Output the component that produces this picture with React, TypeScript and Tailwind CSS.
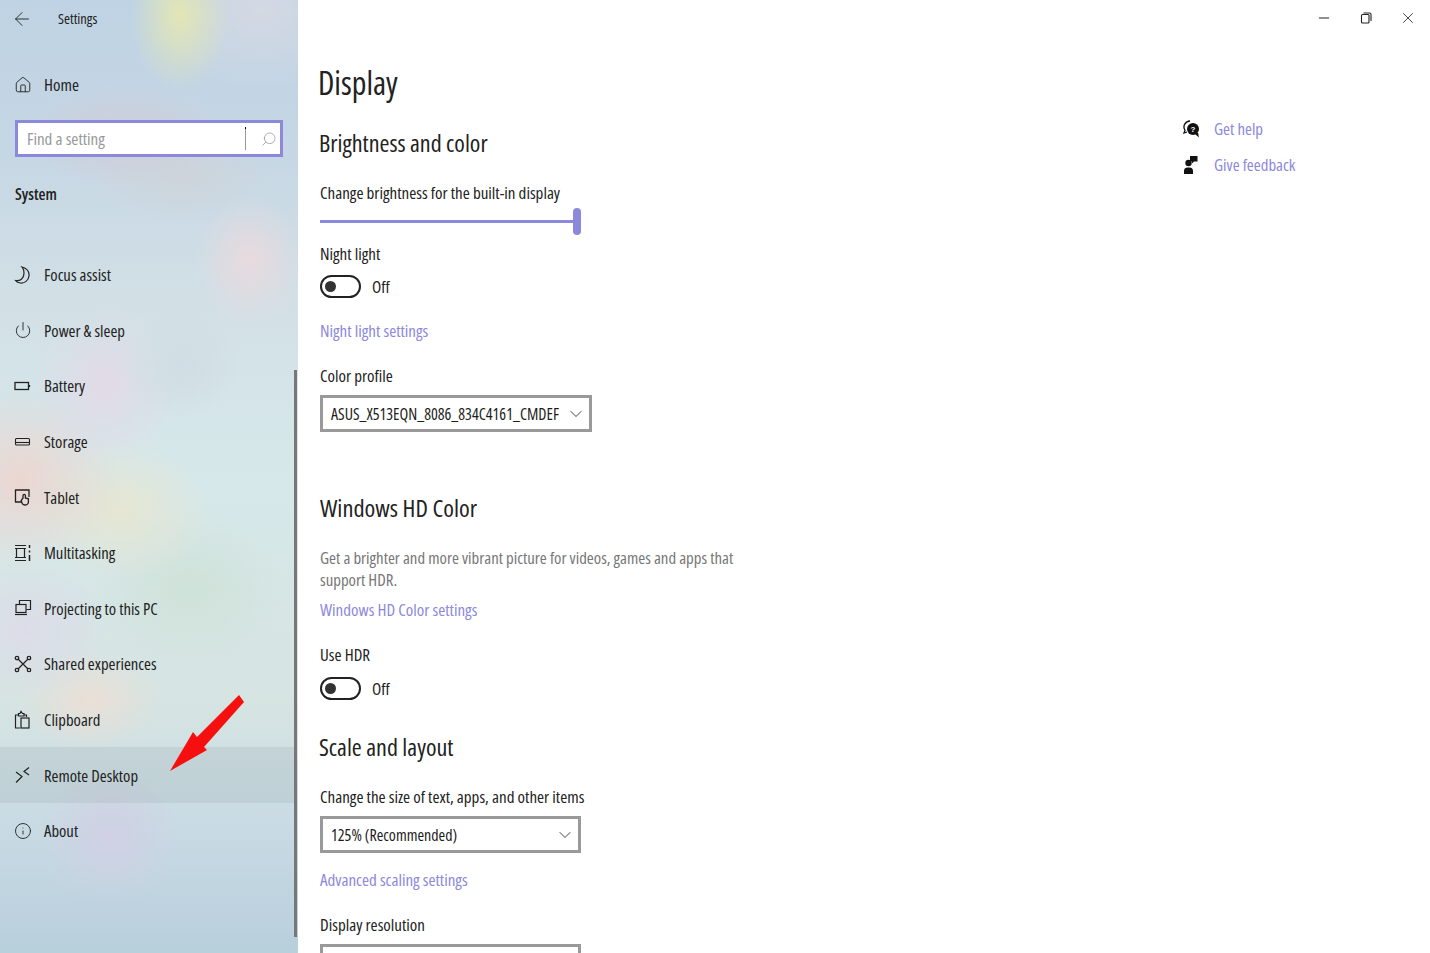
import { ArrowLeft, Home, Search, Power, ChevronDown, Minus, X, Info } from "lucide-react";
import type { ReactNode } from "react";

const cls = "fill-none stroke-[#222]";

function Moon() {
  return (
    <svg width="18" height="18" viewBox="0 0 18 18" className={cls} strokeWidth="1.2">
      <path d="M8 1C13 2.500 15.500 6 15 10C14.500 14.500 10.500 17.500 6.500 17C4.500 16.800 2.500 16 1.500 14.500C5.500 15 8.500 13 9.500 10C10.300 7 10 3.500 8 1z" />
    </svg>
  );
}
function Battery() {
  return (
    <svg width="18" height="18" viewBox="0 0 18 18" className={cls} strokeWidth="1.3">
      <rect x="1" y="5.500" width="13.500" height="7" />
      <path d="M15.500 8v2" />
    </svg>
  );
}
function Storage() {
  return (
    <svg width="18" height="18" viewBox="0 0 18 18" className={cls} strokeWidth="1.1">
      <rect x="1.500" y="5.500" width="14" height="6.500" rx="1" />
      <path d="M2 9.500h13" />
    </svg>
  );
}
function Tablet() {
  return (
    <svg width="18" height="18" viewBox="0 0 18 18" className={cls} strokeWidth="1.3">
      <path d="M8 14H1.500V2h13.500v7" />
      <path d="M9 10V7.500a1.200 1.200 0 0 1 2.400 0V10l3 .8V14a3 3 0 0 1-3 3h-.6a3 3 0 0 1-2.800-2l-.8-2.500z" />
    </svg>
  );
}
function Multitask() {
  return (
    <svg width="18" height="18" viewBox="0 0 18 18" className={cls} strokeWidth="1.2">
      <path d="M1 1.500h11M1 16.500h11M1 13.500h11M1 4.500h11" />
      <path d="M2.500 4.500v9M10.500 4.500v9" />
      <path d="M15.500 1v3M15.500 6.500v2M15.500 11v6" strokeWidth="1.500" />
    </svg>
  );
}
function Project() {
  return (
    <svg width="18" height="18" viewBox="0 0 18 18" className={cls} strokeWidth="1.2">
      <path d="M5.500 5V1.500h11v9h-4" />
      <rect x="2" y="5.500" width="10" height="8" />
      <path d="M1 15.500h12" />
    </svg>
  );
}
function Shared() {
  return (
    <svg width="18" height="18" viewBox="0 0 18 18" className={cls} strokeWidth="1.300">
      <path d="M4 4l10 10M14 4L4 14" />
      <circle cx="3" cy="3" r="1.700" fill="#dfe8e2" />
      <circle cx="15" cy="3" r="1.700" fill="#dfe8e2" />
      <circle cx="3" cy="15" r="1.700" fill="#dfe8e2" />
      <circle cx="15" cy="15" r="1.700" fill="#dfe8e2" />
    </svg>
  );
}
function Clipboard() {
  return (
    <svg width="18" height="20" viewBox="0 0 18 20" className={cls} strokeWidth="1.200">
      <path d="M6 18H1.500V5h3M10 5h2.500v2" />
      <path d="M4.500 6V3.500h1.500L7 1.500 8.500 3.500H10V6z" />
      <rect x="7" y="8" width="8" height="10" />
    </svg>
  );
}
function Remote() {
  return (
    <svg width="18" height="18" viewBox="0 0 18 18" className={cls} strokeWidth="1.200">
      <path d="M2 6l6 4.500-6 6" />
      <path d="M15 1.500l-5 4 5 3.500" />
    </svg>
  );
}
function Restore() {
  return (
    <svg width="12" height="12" viewBox="0 0 12 12" className={cls} strokeWidth="1.100">
      <rect x="1.500" y="2.500" width="7.500" height="8.500" rx="1" />
      <path d="M3.500 1h6a1.500 1.500 0 0 1 1.500 1.500V9" />
    </svg>
  );
}
function HelpIcon() {
  return (
    <svg width="18" height="18" viewBox="0 0 18 18">
      <path d="M7 1a6 6 0 0 0-5 9.300L1 13l3-1" fill="none" stroke="#111" strokeWidth="1.300" />
      <circle cx="10" cy="9" r="6" fill="#111" />
      <path d="M12 14l4 3.500-1-5z" fill="#111" />
      <text x="10" y="12" textAnchor="middle" fontSize="8" fontWeight="700" fill="#fff" fontFamily="Liberation Sans">?</text>
    </svg>
  );
}
function FeedbackIcon() {
  return (
    <svg width="16" height="20" viewBox="0 0 16 20" fill="#111">
      <circle cx="5.500" cy="8" r="3.200" />
      <path d="M1 19v-3.500a3.500 3.500 0 0 1 3.500-3h2a3.500 3.500 0 0 1 3.500 3V19z" />
      <path d="M7 1h7.500v5.500H11L9 8.500V6.500H7z" />
    </svg>
  );
}

const items: { label: string; icon: ReactNode; active?: boolean }[] = [
  { label: "Focus assist", icon: <Moon /> },
  { label: "Power & sleep", icon: <Power size={20} strokeWidth={1.200} /> },
  { label: "Battery", icon: <Battery /> },
  { label: "Storage", icon: <Storage /> },
  { label: "Tablet", icon: <Tablet /> },
  { label: "Multitasking", icon: <Multitask /> },
  { label: "Projecting to this PC", icon: <Project /> },
  { label: "Shared experiences", icon: <Shared /> },
  { label: "Clipboard", icon: <Clipboard /> },
  { label: "Remote Desktop", icon: <Remote />, active: true },
  { label: "About", icon: <Info size={18} strokeWidth={1.200} /> },
];

function Toggle() {
  return (
    <div className="flex items-center gap-[11px]">
      <div className="w-[41px] h-[23px] rounded-full border-2 border-[#222] flex items-center pl-[3px]">
        <div className="w-[11px] h-[11px] rounded-full bg-[#333]" />
      </div>
      <span className="text-[17px] text-[#222] leading-none">Off</span>
    </div>
  );
}

function Select({ label, width }: { label: string; width: string }) {
  return (
    <div className={`${width} h-[37px] border-[3px] border-[#999] flex items-center justify-between pl-[8px] pr-[3px] text-[#1c1c1c] text-[16px]`}>
      <span>{label}</span>
      <ChevronDown size={20} strokeWidth={1} />
    </div>
  );
}

export default function App() {
  return (
    <div className="relative w-[1430px] h-[953px] overflow-hidden bg-white flex text-[#222] text-[17px] [font-family:'Open_Sans','Noto_Sans',sans-serif] [font-stretch:75%]">
      <aside className="relative w-[298px] h-full shrink-0 text-[16.700px] bg-[radial-gradient(ellipse_50px_75px_at_180px_15px,#e2e6b4_0,transparent_100%),radial-gradient(ellipse_110px_80px_at_260px_10px,#d4d9e3_0,transparent_100%),radial-gradient(ellipse_100px_50px_at_125px_135px,#d0ccd8_0,transparent_100%),radial-gradient(ellipse_90px_45px_at_180px_175px,#ced4da_0,transparent_100%),radial-gradient(ellipse_55px_65px_at_250px_260px,#e8dade_0,transparent_100%),radial-gradient(ellipse_60px_55px_at_180px_365px,#d0dde4_0,transparent_100%),radial-gradient(ellipse_70px_80px_at_105px_385px,#e2dae6_0,transparent_100%),radial-gradient(ellipse_100px_90px_at_20px_480px,#ecd6d0_0,transparent_100%),radial-gradient(ellipse_90px_70px_at_120px_510px,#e6e6d2_0,transparent_100%),radial-gradient(ellipse_100px_80px_at_190px_590px,#cfe2d8_0,transparent_100%),radial-gradient(ellipse_90px_70px_at_25px_630px,#dcdce8_0,transparent_100%),radial-gradient(ellipse_70px_50px_at_90px_700px,#eadfd6_0,transparent_100%),radial-gradient(ellipse_70px_70px_at_110px_835px,#d0d0e4_0,transparent_100%),linear-gradient(180deg,#bfd3e4_0,#c5d6e4_140px,#d2e0e6_300px,#d6e8ea_480px,#d6e4e2_700px,#c8dae4_830px,#b8cfdc_953px)]">
        <div className="flex items-center h-[38px] pl-[11px]">
          <ArrowLeft size={22} strokeWidth={1} />
          <span className="ml-[25px] text-[14.500px]">Settings</span>
        </div>
        <div className="flex items-center h-[59px] mt-[23px] pl-[14px] pb-[11px]">
          <Home size={18} strokeWidth={1.200} />
          <span className="ml-[12px] text-[17px]">Home</span>
        </div>
        <div className="mx-[15px] w-[268px] h-[37px] bg-white border-[3px] border-[#8c88dc] flex items-center justify-between pl-[9px] pr-[3px]">
          <span className="text-[#999] text-[17px]">Find a setting</span>
          <div className="flex items-center gap-[15px]">
            <div className="w-px h-[23px] bg-[#999] border-t-2 border-black" />
            <Search size={16} strokeWidth={1} className="text-[#888] -scale-x-100" />
          </div>
        </div>
        <div className="mt-[25px] pl-[15px] h-[24px] text-[16px] font-semibold leading-[24px]">System</div>
        <nav className="mt-[41px]">
          {items.map((it) => (
            <div key={it.label} className={`flex items-center h-[55.600px] pl-[14px] ${it.active ? "bg-[#788a8a]/15 w-[296px]" : ""}`}>
              <span className="w-[18px] flex justify-center">{it.icon}</span>
              <span className="ml-[12px]">{it.label}</span>
            </div>
          ))}
        </nav>
        <div className="absolute left-[294px] top-[370px] w-[3px] h-[567px] bg-[#777]" />
        <svg className="absolute left-[165px] top-[690px]" width="85" height="90" viewBox="165 690 85 90">
          <polygon points="239,695 244,702 204,747 207,750 170,771 193,732 197,737" fill="#f50f0f" />
        </svg>
      </aside>

      <main className="flex-1 pl-[20px] relative">
        <h1 className="mt-[61px] text-[32px] leading-[44px]">Display</h1>
        <h2 className="mt-[20px] text-[24px] leading-[36px] ml-[1px]">Brightness and color</h2>
        <p className="mt-[19px] ml-[2px] leading-[26px]">Change brightness for the built-in display</p>
        <div className="ml-[2px] mt-[1px] w-[261px] h-[28px] flex items-center">
          <div className="flex-1 h-[3px] bg-[#8c88dc]" />
          <div className="w-[8px] h-[27px] rounded-full bg-[#8c88dc]" />
        </div>
        <p className="mt-[6px] ml-[2px] leading-[26px]">Night light</p>
        <div className="mt-[8px] ml-[2px]"><Toggle /></div>
        <p className="mt-[20px] ml-[2px] leading-[26px] text-[#8c88dc]">Night light settings</p>
        <p className="mt-[19px] ml-[2px] leading-[26px]">Color profile</p>
        <div className="mt-[6px] ml-[2px]"><Select label="ASUS_X513EQN_8086_834C4161_CMDEF" width="w-[272px]" /></div>

        <h2 className="mt-[58px] ml-[2px] text-[24.400px] leading-[36px]">Windows HD Color</h2>
        <p className="mt-[21px] ml-[2px] w-[430px] text-[16.800px] leading-[22px] text-[#777]">Get a brighter and more vibrant picture for videos, games and apps that support HDR.</p>
        <p className="mt-[6px] ml-[2px] leading-[26px] text-[#8c88dc]">Windows HD Color settings</p>
        <p className="mt-[19px] ml-[2px] leading-[26px]">Use HDR</p>
        <div className="mt-[9px] ml-[2px]"><Toggle /></div>

        <h2 className="mt-[29px] ml-[1px] text-[24px] leading-[36px]">Scale and layout</h2>
        <p className="mt-[19px] ml-[2px] leading-[26px]">Change the size of text, apps, and other items</p>
        <div className="mt-[6px] ml-[2px]"><Select label="125% (Recommended)" width="w-[261px]" /></div>
        <p className="mt-[14px] ml-[2px] leading-[26px] text-[#8c88dc]">Advanced scaling settings</p>
        <p className="mt-[19px] ml-[2px] leading-[26px]">Display resolution</p>
        <div className="mt-[6px] ml-[2px] w-[261px] h-[37px] border-[3px] border-[#999]" />

        <div className="absolute left-[885px] top-[119px] flex flex-col gap-[16px]">
          <div className="flex items-center gap-[14px] h-[20px]">
            <span className="w-[17px]"><HelpIcon /></span>
            <span className="text-[16.800px] text-[#8c88dc]">Get help</span>
          </div>
          <div className="flex items-center gap-[14px] h-[20px]">
            <span className="w-[17px]"><FeedbackIcon /></span>
            <span className="text-[16.800px] text-[#8c88dc]">Give feedback</span>
          </div>
        </div>
        <div className="absolute right-[13px] top-[9px] flex items-center gap-[27px]">
          <Minus size={16} strokeWidth={1.600} className="mr-[1px]" />
          <Restore />
          <X size={18} strokeWidth={1.100} />
        </div>
      </main>
    </div>
  );
}
